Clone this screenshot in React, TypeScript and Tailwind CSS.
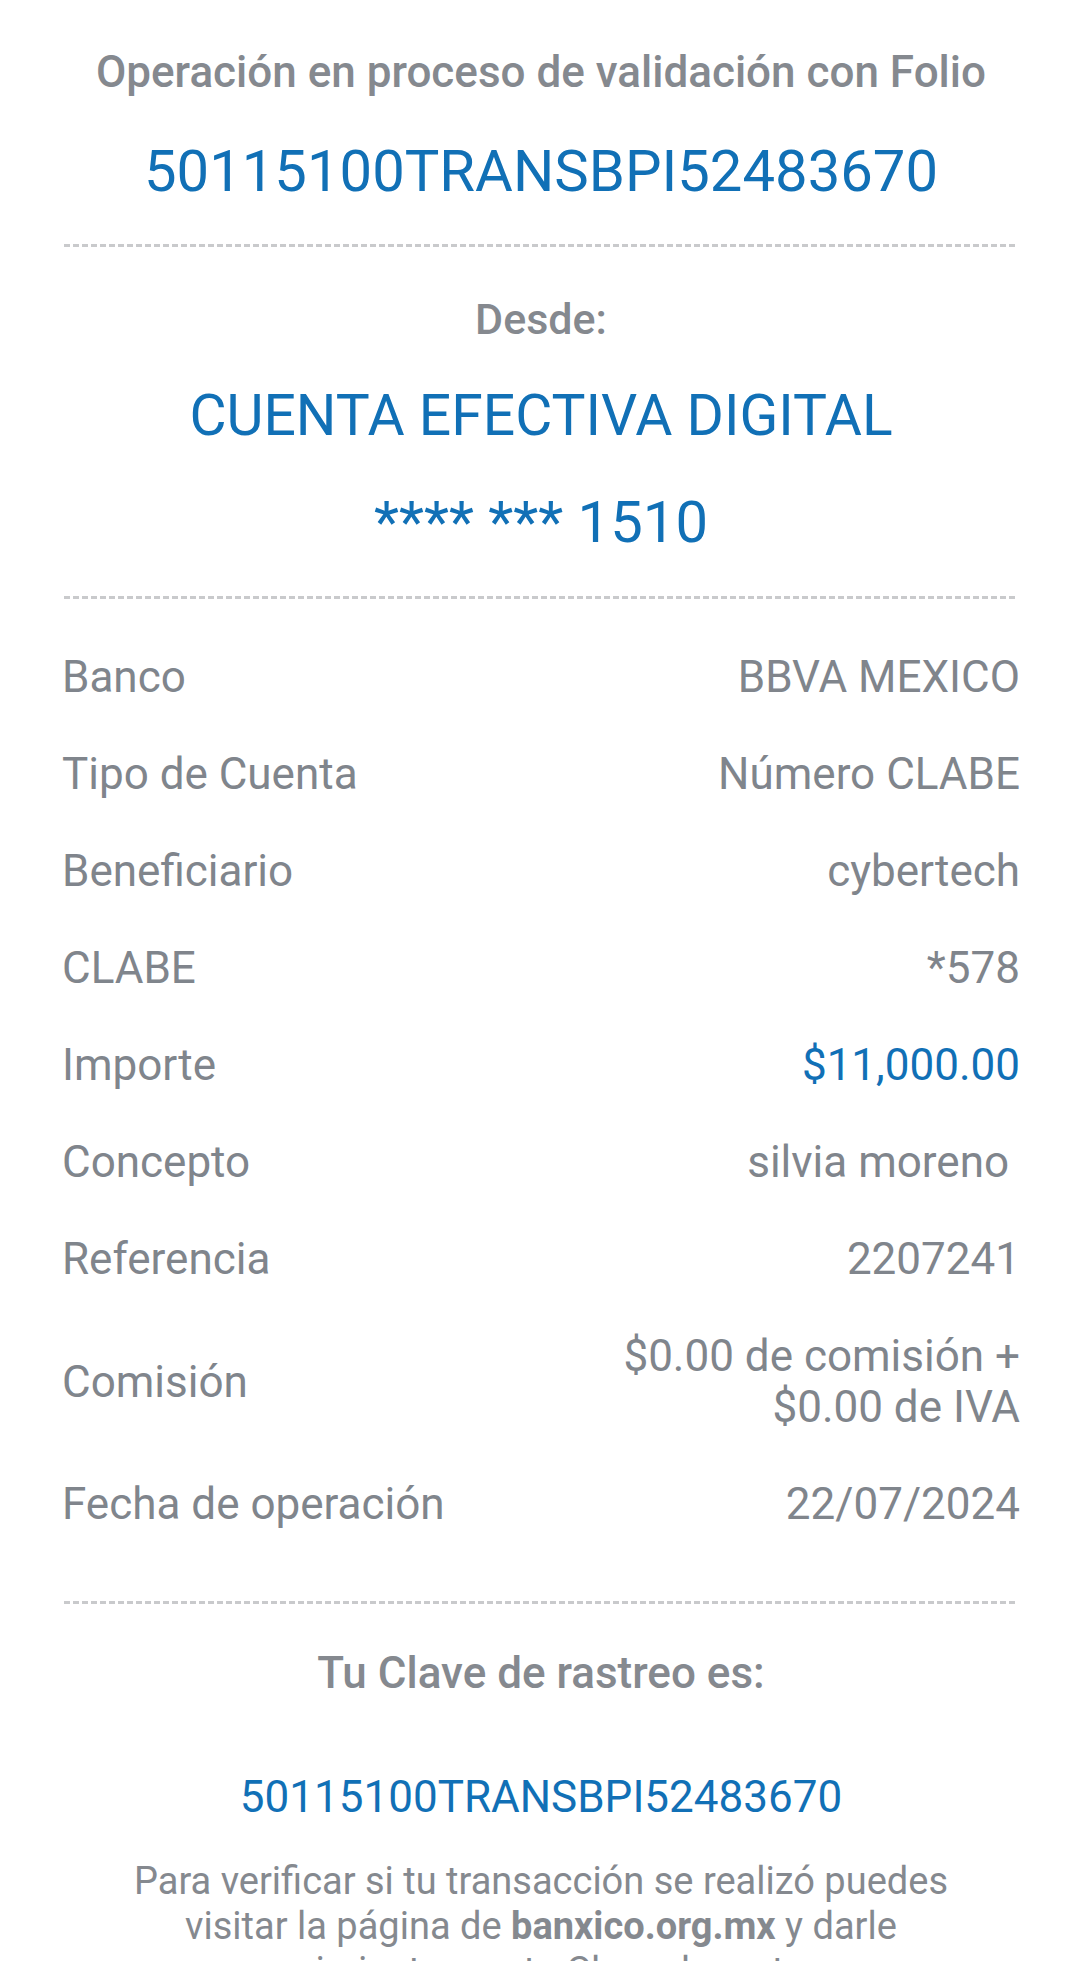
import React from 'react';

const rows: { label: string; value: React.ReactNode; blue?: boolean }[] = [
  { label: 'Banco', value: 'BBVA MEXICO' },
  { label: 'Tipo de Cuenta', value: 'Número CLABE' },
  { label: 'Beneficiario', value: 'cybertech' },
  { label: 'CLABE', value: '*578' },
  { label: 'Importe', value: '$11,000.00', blue: true },
  { label: 'Concepto', value: 'silvia moreno\u00a0' },
  { label: 'Referencia', value: '2207241' },
];

const Dashed: React.FC<{ className?: string }> = ({ className = '' }) => (
  <div
    className={`mx-[2px] h-[3px] bg-[repeating-linear-gradient(to_right,#c9cacc_0px,#c9cacc_6px,transparent_6px,transparent_9px)] ${className}`}
  />
);

const App: React.FC = () => {
  return (
    <div className="h-[1961px] w-[1080px] overflow-hidden bg-white font-[Roboto,sans-serif] text-[#80858c]">
      <div className="pl-[62px] pr-[60px] pt-[47px]">
        {/* Folio */}
        <p className="text-center text-[44px] font-medium leading-[50px] text-[#85898f]">
          Operación en proceso de validación con Folio
        </p>
        <p className="mt-[40px] text-center text-[58px] leading-[68px] text-[#1170b6]">
          50115100TRANSBPI52483670
        </p>
        <Dashed className="mt-[39px]" />

        {/* Cuenta origen */}
        <p className="mt-[47px] text-center text-[43px] font-medium leading-[50px] text-[#85898f]">Desde:</p>
        <p className="mt-[38px] text-center text-[57px] leading-[68px] text-[#1170b6]">CUENTA EFECTIVA DIGITAL</p>
        <p className="mt-[38px] text-center text-[58px] leading-[68px] text-[#1170b6]">**** *** 1510</p>
        <Dashed className="mt-[40px]" />

        {/* Detalle */}
        <div className="mt-[30px] flex flex-col">
          {rows.map((r) => (
            <div key={r.label} className="flex h-[97px] items-center justify-between text-[44px] leading-[51px]">
              <span>{r.label}</span>
              <span className={`whitespace-pre ${r.blue ? 'text-[#1170b6]' : ''}`}>{r.value}</span>
            </div>
          ))}
          <div className="flex h-[148px] items-center justify-between text-[44px] leading-[51px]">
            <span>Comisión</span>
            <span className="text-right">
              $0.00 de comisión +<br />
              $0.00 de IVA
            </span>
          </div>
          <div className="flex h-[97px] items-center justify-between text-[44px] leading-[51px]">
            <span>Fecha de operación</span>
            <span>22/07/2024</span>
          </div>
        </div>
        <Dashed className="mt-[48px]" />

        {/* Rastreo */}
        <p className="mt-[44px] text-center text-[44px] font-medium leading-[50px] text-[#85898f]">
          Tu Clave de rastreo es:
        </p>
        <p className="mt-[74px] text-center text-[44px] leading-[50px] text-[#1170b6]">50115100TRANSBPI52483670</p>
        <p className="mt-[37px] text-center text-[38px] leading-[45px] text-[#85898f]">
          Para verificar si tu transacción se realizó puedes
          <br />
          visitar la página de <span className="font-bold">banxico.org.mx</span> y darle
          <br />
          seguimiento con tu Clave de rastreo.
        </p>
      </div>
    </div>
  );
};

export default App;
